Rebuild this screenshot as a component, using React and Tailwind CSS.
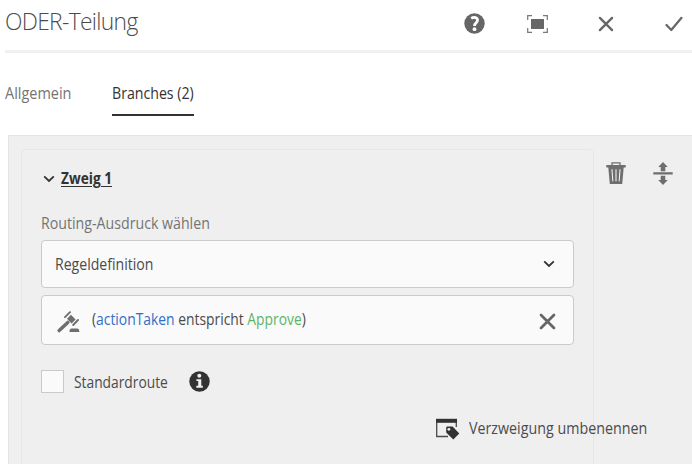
import React from "react";

const Chevron = () => (
  <svg width="12" height="8" viewBox="0 0 12 8" fill="none" stroke="#323232" strokeWidth="1.8">
    <path d="M1.2 1.3 6 5.9 10.8 1.3" />
  </svg>
);

const Cross = ({ size, w }) => (
  <svg width={size} height={size} viewBox="0 0 16 16" fill="none" stroke="#666" strokeWidth={w} strokeLinecap="round">
    <path d="M1.9 1.9 14.1 14.1M14.1 1.9 1.9 14.1" />
  </svg>
);

const Header = () => (
  <header className="ml-[5px] flex h-[53px] border-b-[3px] border-[#f0f0f0]">
    <h1 className="w-[459px] pt-[5px] text-[24px] leading-[32px] font-light tracking-[-0.7px] text-[#4b4b4b]">
      <span className="inline-block origin-left scale-x-[0.95]">ODER-Teilung</span>
    </h1>
    <div className="flex h-[47px] items-center">
      <svg width="21" height="21" viewBox="0 0 21 21">
        <circle cx="10.5" cy="10.5" r="10.2" fill="#666" />
        <path d="M7.2 5.4C10 3.6 13.5 4.3 13.5 7.2 13.5 9.8 10.6 9.9 10.5 13" fill="none" stroke="#fff" strokeWidth="2.8" />
        <circle cx="10.5" cy="16.2" r="1.9" fill="#fff" />
      </svg>
      <svg className="ml-[42px]" width="21" height="18" viewBox="0 0 21 18">
        <path d="M.7 5V.7H5M16 .7h4.3V5M20.3 13v4.3H16M5 17.3H.7V13" fill="none" stroke="#777" strokeWidth="1.2" />
        <path d="M4 4h13v10H4z" fill="#666" />
      </svg>
      <span className="ml-[50px]"><Cross size={16} w={2.3} /></span>
      <svg className="ml-[51px]" width="18" height="16" viewBox="0 0 18 16" fill="none" stroke="#666" strokeWidth="2.2" strokeLinecap="round" strokeLinejoin="round">
        <path d="M1.5 9 6.3 14 16.5 1.8" />
      </svg>
    </div>
  </header>
);

const Tabs = () => (
  <nav className="ml-[5px] mt-[28px] flex h-[35px] gap-[41px] leading-[24px]">
    <span className="w-[66px] text-[#747474]"><span className="inline-block origin-left scale-x-[0.903]">Allgemein</span></span>
    <span className="w-[82px] border-b-2 border-[#323232] text-[#323232]"><span className="inline-block origin-left scale-x-[0.884]">Branches (2)</span></span>
  </nav>
);

const RenameAction = () => (
  <div className="ml-[395px] mt-[24px] flex h-[22px] items-center text-[#4b4b4b]">
    <svg className="mt-[2px] shrink-0" width="24" height="22" viewBox="0 0 24 22">
      <path d="M.7 1v17.5H12M20.3 4v5" fill="none" stroke="#4b4b4b" strokeWidth="1.3" />
      <path d="M0 .8h21v4H0z" fill="#323232" />
      <path d="M10.2 9.8q0-1.2 1.2-1.2h5.2l6.7 6.8-6 6-7.1-6.8z" fill="#323232" />
      <circle cx="12.9" cy="11.3" r="1.4" fill="#efefef" />
    </svg>
    <span className="ml-[9px] inline-block origin-left scale-x-[0.892]">Verzweigung umbenennen</span>
  </div>
);

const BranchCard = () => (
  <section className="h-[320px] w-[573px] shrink-0 rounded-t-[5px] border border-[#e6e6e6] pl-[19px] pt-[17px]">
    <div className="flex h-6 items-center pl-[2px]">
      <Chevron />
      <span className="-mt-[2px] ml-[6px] inline-block origin-left scale-x-[0.855] font-bold text-[#323232] underline underline-offset-2">Zweig 1</span>
    </div>
    <div className="mt-[20px] h-6 leading-6 text-[#747474]"><span className="inline-block origin-left scale-x-[0.886]">Routing-Ausdruck wählen</span></div>
    <div className="mt-[5px] flex h-[48px] w-[533px] items-center justify-between rounded-[4px] border border-[#cacaca] bg-[#fafafa] pl-[13px] pr-[18px] text-[#4b4b4b]">
      <span className="inline-block origin-left scale-x-[0.88]">Regeldefinition</span>
      <Chevron />
    </div>
    <div className="mt-[7px] flex h-[50px] w-[533px] items-center rounded-[4px] border border-[#cacaca] bg-[#fafafa] pl-[15px] pr-[17px] text-[#4b4b4b]">
      <svg className="mt-[3px]" width="23" height="22" viewBox="0 0 23 22" fill="none" stroke="#6e6e6e" strokeLinecap="round">
        <path d="M2.2 19.6 10.8 11.4" strokeWidth="3.4" />
        <path d="M8 6.2 13 1.2M16.2 14 21 9" strokeWidth="1.9" />
        <path d="m14 3.8 4.6 4.6-4 4-4.6-4.6z" fill="#6e6e6e" stroke="none" />
        <path d="M12.5 21v-1.3q.4-2.2 2-2.2h5.8q1.6 0 2 2.2V21z" fill="#6e6e6e" stroke="none" />
      </svg>
      <span className="-mt-[2px] ml-[12px] inline-block origin-left scale-x-[0.866]">
        (<span className="text-[#326ec8]">actionTaken</span> entspricht <span className="text-[#5cb567]">Approve</span>)
      </span>
      <span className="ml-auto mt-[3px]"><Cross size={17} w={2.6} /></span>
    </div>
    <div className="mt-[25px] flex h-[23px] items-center text-[#4b4b4b]">
      <span className="h-[23px] w-[23px] border border-[#cacaca] bg-[#fafafa]" />
      <span className="ml-[10px] w-[115px]"><span className="inline-block origin-left scale-x-[0.862]">Standardroute</span></span>
      <svg width="21" height="21" viewBox="0 0 21 21">
        <circle cx="10.5" cy="10.5" r="10.2" fill="#323232" />
        <circle cx="10.3" cy="4.8" r="2" fill="#efefef" />
        <path d="M7.4 8.3h4.9v6.5h1.5v1.9H7.3v-1.9h1.9V10H7.4z" fill="#efefef" />
      </svg>
    </div>
    <RenameAction />
  </section>
);

export default function App() {
  return (
    <div className="h-[464px] w-[692px] overflow-hidden bg-white font-['Open_Sans','Noto_Sans',sans-serif] text-[16px] leading-[22px] whitespace-nowrap">
      <Header />
      <Tabs />
      <main className="ml-2 mt-[19px] flex h-[329px] border-l border-t border-[#e4e4e4] bg-[#efefef] pl-3 pt-[13px]">
        <BranchCard />
        <div className="ml-[12px] mt-[13px] flex h-[24px] items-start gap-[27px]">
          <svg width="20" height="23" viewBox="0 0 20 23">
            <path d="M6 3V.8h8V3" fill="none" stroke="#6e6e6e" strokeWidth="1.3" />
            <path d="M.3 2.9h19.4v2.6H.3zM2.3 5.4h15.4L16.2 22H3.8z" fill="#6e6e6e" />
            <path d="m6 7.2.8 12M10 7.2v12M14 7.2l-.8 12" stroke="#efefef" strokeWidth="1.1" />
          </svg>
          <svg width="20" height="23" viewBox="0 0 20 23" fill="#6e6e6e">
            <path d="M.3 10.2h19.4v2.4H.3zM10 0l4.8 5h-2.5v4.2H7.7V5H5.2zM10 23l4.8-5h-2.5v-4.2H7.7V18H5.2z" />
          </svg>
        </div>
      </main>
    </div>
  );
}
